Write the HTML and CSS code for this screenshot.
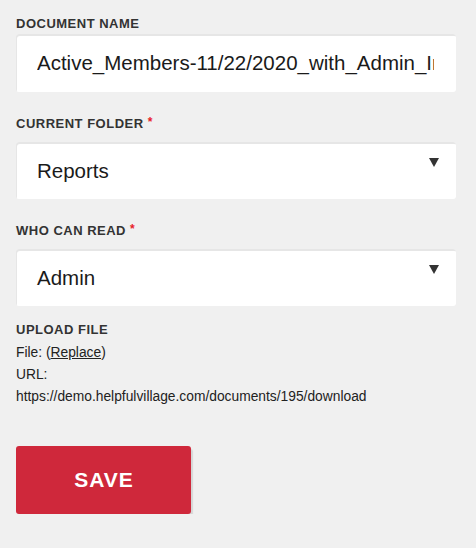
FILE: index.html
```html
<!doctype html>
<html>
<head>
    <title>Edit document</title>
    <link rel="stylesheet" href="styles.css">
</head>
<body>
    <form class="doc-form">
        <div class="field">
            <label class="field-label">Document Name</label>
            <input class="text-box" type="text" value="Active_Members-11/22/2020_with_Admin_Info.csv">
        </div>
        <div class="field">
            <label class="field-label required">Current Folder <span class="req">*</span></label>
            <div class="select-box">
                <span class="select-value">Reports</span>
                <svg class="select-arrow" width="10" height="9" viewBox="0 0 10 9"><polygon points="0,0 10,0 5,9" fill="#333"/></svg>
            </div>
        </div>
        <div class="field">
            <label class="field-label required">Who Can Read <span class="req">*</span></label>
            <div class="select-box">
                <span class="select-value">Admin</span>
                <svg class="select-arrow" width="10" height="9" viewBox="0 0 10 9"><polygon points="0,0 10,0 5,9" fill="#333"/></svg>
            </div>
        </div>
        <div class="upload">
            <div class="field-label">Upload File</div>
            <div class="upload-line">File: (<a href="#" class="replace">Replace</a>)</div>
            <div class="upload-line">URL:</div>
            <div class="upload-line">https://demo.helpfulvillage.com/documents/195/download</div>
        </div>
        <button type="button" class="save-btn">Save</button>
    </form>
</body>
</html>
```

FILE: styles.css
```css
body {
    margin: 0;
    background: #f0f0f0;
    font-family: "Liberation Sans", Arial, sans-serif;
    color: #333;
}
.doc-form {
    padding: 16px 20px 0 16px;
}
.field {
    margin-bottom: 24px;
}
.field-label {
    display: block;
    font-size: 13px;
    font-weight: bold;
    letter-spacing: 0.5px;
    text-transform: uppercase;
    line-height: 16px;
    margin-bottom: 2px;
    color: #333;
}
.field-label.required {
    margin-bottom: 10px;
}
.req {
    color: #e8202a;
    font-size: 12px;
    letter-spacing: 0;
    vertical-align: top;
    line-height: 12px;
}
/* Boxes */
.text-box,
.select-box {
    box-sizing: border-box;
    width: 440px;
    height: 58px;
    background: #fff;
    border: 0;
    border-radius: 3px;
    box-shadow: inset 1px 2px 0 #e6e6e6;
    font-family: "Liberation Sans", Arial, sans-serif;
    font-size: 20.5px;
    color: #1a1a1a;
}
.text-box {
    display: block;
    padding: 0 22px 0 21px;
    outline: none;
}
.select-box {
    display: flex;
    justify-content: space-between;
    align-items: center;
    height: 57px;
    padding: 0 17px 0 21px;
}
.select-arrow {
    align-self: flex-start;
    margin-top: 16px;
}
/* Upload */
.upload {
    margin-top: -8px;
}
.upload .field-label {
    margin-bottom: 4px;
}
.upload-line {
    font-size: 13.8px;
    line-height: 22px;
    color: #222;
}
.replace {
    color: #222;
    text-decoration: underline;
}
/* Save */
.save-btn {
    display: block;
    margin-top: 38px;
    width: 175px;
    height: 68px;
    background: #cf283b;
    border: 0;
    border-radius: 3px;
    box-shadow: 2px 3px 1px #d6d6d6;
    color: #fff;
    font-family: "Liberation Sans", Arial, sans-serif;
    font-size: 21px;
    font-weight: bold;
    letter-spacing: 1px;
    text-transform: uppercase;
    padding: 0 0 0 1px;
}
```
